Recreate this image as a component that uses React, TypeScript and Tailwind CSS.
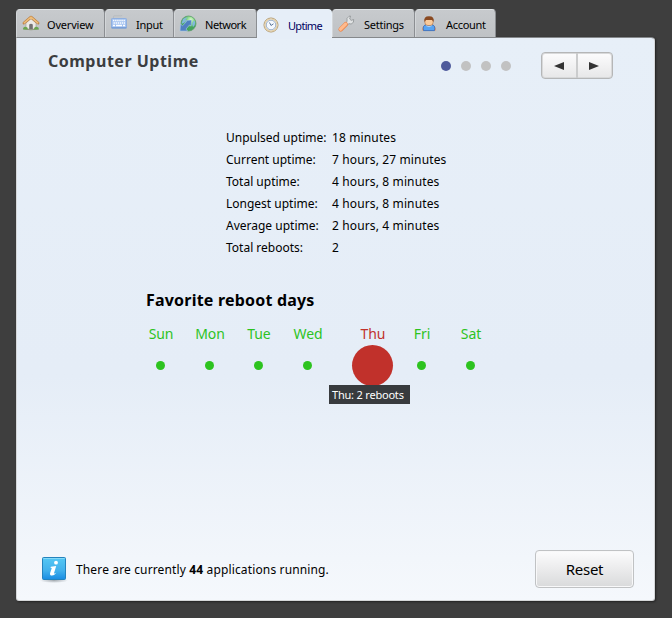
import React from "react";

function HomeIcon() {
  return (
    <svg width="18" height="18" viewBox="0 0 18 18">
      <ellipse cx="9" cy="14" rx="7.500" ry="1.200" fill="#8d9a7f" />
      <path d="M4 8 9 3.500 14 8v6H4z" fill="#eceae6" stroke="#a59c90" strokeWidth=".6" />
      <path d="M7.200 14V9.600q1.800-1.600 3.600 0V14z" fill="#747272" />
      <path d="M2 8 9 2.200 16 8" fill="none" stroke="#b97d40" strokeWidth="2.800" strokeLinejoin="round" strokeLinecap="round" />
      <path d="M2.200 7.800 9 2.200 15.800 7.800" fill="none" stroke="#edbd7a" strokeWidth="1.600" strokeLinejoin="round" strokeLinecap="round" />
      <path d="M1 14.500q0-3 2.500-2.800Q6 12 6 14.500zM12 14.500q0-3 2.500-2.800Q17 12 17 14.500z" fill="#69a64f" />
    </svg>
  );
}

function KeyboardIcon() {
  return (
    <svg width="18" height="18" viewBox="0 0 18 18">
      <path d="M3.500 3V1.800q0-1 1-1h6q1.500 0 1.500-.8" fill="none" stroke="#b5b9bd" strokeWidth=".8" />
      <rect x="1.500" y="3.500" width="15" height="9.500" rx=".8" fill="#a5c3f0" stroke="#8fafdf" />
      <path d="M3 5.500h12M3.500 8h11.500" stroke="#f9fcff" strokeWidth="1.500" strokeDasharray="1.400 .7" />
      <path d="M3 10.500h2m1 0h6m1 0h2" stroke="#fff" strokeWidth="1.400" />
      <path d="M1.500 12.900h15" stroke="#6691cf" />
    </svg>
  );
}

function GlobeIcon() {
  return (
    <svg width="18" height="18" viewBox="0 0 18 18">
      <defs>
        <radialGradient id="globe" cx="65%" cy="25%">
          <stop stopColor="#dcfacb" /><stop offset=".5" stopColor="#84d883" /><stop offset="1" stopColor="#43a25d" />
        </radialGradient>
      </defs>
      <circle cx="9.500" cy="8.500" r="7.500" fill="url(#globe)" stroke="#5c9c6c" strokeWidth=".8" />
      <path d="M4 4Q6 2 8.500 2.500L6 5.500l1 1-3 2-1.500 0zM14.500 5.500l1.500 1q.5 3.500-2 5.500l-.8-3z" fill="#80b8dc" />
      <path d="M1 16 1.500 9l2 1.800 4-4.300L6.500 5.500l6-.5-.5 6-1.500-1-3.500 4 1.500 2z" fill="#4f7fc0" stroke="#a8cdea" strokeWidth=".6" />
    </svg>
  );
}

function ClockIcon() {
  return (
    <svg width="16" height="16" viewBox="0 0 16 16">
      <circle cx="8" cy="8" r="7" fill="#fff" stroke="#b0976b" strokeWidth="1" />
      <circle cx="8" cy="8" r="6" fill="none" stroke="#e4cfa6" strokeWidth="1.100" />
      <circle cx="8" cy="8" r="4.800" fill="#f5f9ff" stroke="#8099ba" strokeWidth=".8" />
      <path d="M6.500 5.500 8 8.500 10.500 6.800" fill="none" stroke="#617b9e" strokeWidth="1" />
    </svg>
  );
}

function WrenchIcon() {
  return (
    <svg width="18" height="18" viewBox="0 0 18 18">
      <path d="M7.500 9 10 6.300Q9 3 12 1.300l1.500-.3-.8 3 1.500 1.400 2.500-.9q.5 3.500-2.300 4.300-1.200.4-2.400-.2L9.300 11z" fill="#e2e4e5" stroke="#8c9092" strokeWidth=".8" />
      <path d="m8.700 9.300-5 5" stroke="#eb8950" strokeWidth="4.600" strokeLinecap="round" />
      <path d="m8.600 9.200-5 5" stroke="#ffba8c" strokeWidth="3.200" strokeLinecap="round" />
    </svg>
  );
}

function UserIcon() {
  return (
    <svg width="16" height="16" viewBox="0 0 16 16">
      <path d="M.8 14.500Q1.500 9 5.500 8.500h5Q14.500 9 15.200 14.500z" fill="#e9a06a" />
      <path d="M2.500 14.600Q1 9 6 8.500h4Q15 9 13.500 14.600z" fill="#58a4f1" stroke="#2b67c0" strokeWidth=".8" />
      <path d="M5 9.500q3 2.500 6 0" stroke="#a5d1ff" fill="none" />
      <rect x="3.900" y="1.500" width="8.200" height="8" rx="3" fill="#f9cb9b" stroke="#a96b3e" strokeWidth=".6" />
      <path d="M3.500 6Q2.200.3 8 .3T12.500 6L11 4H5z" fill="#8a4a22" />
    </svg>
  );
}

function InfoIcon() {
  return (
    <svg width="28" height="28" viewBox="0 0 28 28">
      <defs>
        <linearGradient id="info" x2="0" y2="1"><stop stopColor="#55c8f4" /><stop offset=".6" stopColor="#41b0ec" /><stop offset="1" stopColor="#198ce3" /></linearGradient>
        <radialGradient id="infoShadow"><stop stopColor="#a5acb2" /><stop offset="1" stopColor="#a5acb2" stopOpacity="0" /></radialGradient>
      </defs>
      <ellipse cx="14" cy="24.500" rx="14" ry="2.500" fill="url(#infoShadow)" />
      <rect x="2.500" y="1.500" width="23" height="22" rx="1" fill="url(#info)" stroke="#2483bd" />
      <path d="M3.500 2.500h21" stroke="#84daf8" />
      <circle cx="16" cy="6.700" r="1.900" fill="#fff" />
      <path d="M10.800 10.800 16.200 10 14 17.200Q14 18 16.300 16.800 14.500 19.500 12 19.500 9.300 19.500 10.200 16.700L11.800 12 10.500 11.800z" fill="#fff" />
    </svg>
  );
}

const tabs = [
  { name: "Overview", icon: <HomeIcon />, box: "w-[89px] pl-[5px] gap-[7px] tracking-[-0.2px]" },
  { name: "Input", icon: <KeyboardIcon />, box: "w-[69px] pl-[4px] gap-[8px] tracking-[-0.3px]" },
  { name: "Network", icon: <GlobeIcon />, box: "w-[83px] pl-[4px] gap-[8px] tracking-[-0.45px]" },
  { name: "Uptime", icon: <ClockIcon />, box: "w-[75px] pl-[5px] gap-[9px] tracking-[-0.7px]", active: true },
  { name: "Settings", icon: <WrenchIcon />, box: "w-[83px] pl-[4px] gap-[9px] tracking-[-0.25px]" },
  { name: "Account", icon: <UserIcon />, box: "w-[81px] pl-[5px] gap-[9px] tracking-[-0.3px]" },
];

const stats = [
  ["Unpulsed uptime:", "18 minutes"],
  ["Current uptime:", "7 hours, 27 minutes"],
  ["Total uptime:", "4 hours, 8 minutes"],
  ["Longest uptime:", "4 hours, 8 minutes"],
  ["Average uptime:", "2 hours, 4 minutes"],
  ["Total reboots:", "2"],
];

const days = [
  { name: "Sun", box: "w-[49px]" },
  { name: "Mon", box: "w-[49px]" },
  { name: "Tue", box: "w-[49px]" },
  { name: "Wed", box: "w-[49px]" },
  { name: "Thu", box: "w-[81px]", hot: true },
  { name: "Fri", box: "w-[17px]" },
  { name: "Sat", box: "w-[81px]" },
];

export default function App() {
  return (
    <main className="h-[618px] w-[672px] overflow-hidden bg-[#3e3e3e] pl-[16px] pt-[9px] font-['Noto_Sans',sans-serif] text-[12px] text-black">
      <nav className="flex h-[28px] items-start">
        {tabs.map((t) => (
          <div
            key={t.name}
            className={`${t.box} flex shrink-0 items-center rounded-t-[4px] border border-b-0 text-[11px] ${
              t.active ? "relative z-10 h-[30px] border-[#e8f0f8] bg-[#e6eef8] pt-[1px] text-[#000060]" : "h-[28px] border-[#8b8e92] border-t-[#dce0e3] border-l-[#d3d6d9] bg-linear-to-b from-[#c7cacd] to-[#bfc2c5]"
            }`}
          >
            <span className="flex shrink-0">{t.icon}</span>
            <span className="whitespace-nowrap pt-[3px]">{t.name}</span>
          </div>
        ))}
      </nav>
      <section className="flex h-[564px] w-[639px] flex-col rounded-b-[3px] rounded-tr-[4px] border border-[#d5d7d9] border-t-[#85888b] bg-linear-to-b from-[#e7eff8] via-[#e5edf7] via-60% to-[#f5f8fc] shadow-[1px_1px_2px_#222]">
        <header className="flex h-[55px] items-start pl-[31px]">
          <h1 className="w-[393px] pt-[11px] text-[16px] leading-[24px] font-bold tracking-[0.5px] text-[#3b3d40]">Computer Uptime</h1>
          <div className="mt-[22.5px] flex w-[100px] gap-[10px]">
            <i className="size-[10px] rounded-full bg-[#4f5b9c]" />
            <i className="size-[10px] rounded-full bg-[#c2c2c2]" />
            <i className="size-[10px] rounded-full bg-[#c2c2c2]" />
            <i className="size-[10px] rounded-full bg-[#c2c2c2]" />
          </div>
          <div className="mt-[14px] flex h-[27px] w-[72px] rounded-[4px] border border-[#b5b6b7] bg-linear-to-b from-[#fcfcfd] to-[#e7e7e8] shadow-[inset_0_0_0_1px_#d8d9da]">
            <button className="flex w-[36px] items-center justify-center border-r-2 border-[#cbcccd]"><svg width="10" height="8"><path d="M0 4 10 0v8z" fill="#333" /></svg></button>
            <button className="flex flex-1 items-center justify-center pr-[2px]"><svg width="10" height="8"><path d="M10 4 0 0v8z" fill="#333" /></svg></button>
          </div>
        </header>
        <dl className="mt-[34px] grid grid-cols-[106px_1fr] pl-[209px] leading-[22px]">
          {stats.map(([k, v]) => (
            <React.Fragment key={k}>
              <dt className="whitespace-nowrap">{k}</dt>
              <dd className="tracking-[0.13px]">{v}</dd>
            </React.Fragment>
          ))}
        </dl>
        <h2 className="mt-[29px] pl-[129px] text-[16px] leading-[24px] font-bold tracking-[0.2px]">Favorite reboot days</h2>
        <div className="mt-[12px] flex pl-[118.5px] text-[14px]">
          {days.map((d) => (
            <div key={d.name} className={`${d.box} relative flex shrink-0 flex-col items-center ${d.hot ? "text-[#c1312b]" : "text-[#2dc31f]"}`}>
              <span className="relative left-[1px] leading-[20px] tracking-[-0.1px]">{d.name}</span>
              <div className="flex h-[42px] items-center">
                <i className={`block rounded-full ${d.hot ? "size-[41px] bg-[#c1312b]" : "size-[9px] bg-[#2dc31f]"}`} />
              </div>
              {d.hot && <span className="absolute left-[-2.5px] top-[61px] h-[19px] w-[81px] bg-[#383b3e] pl-[3px] text-[11px] leading-[20px] tracking-[-0.2px] whitespace-nowrap text-white">Thu: 2 reboots</span>}
            </div>
          ))}
        </div>
        <footer className="mt-auto mb-[12px] flex items-center pl-[23px]">
          <div className="flex w-[495px] items-center pt-[2px]">
            <InfoIcon />
            <p className="pl-[8px] tracking-[0.14px]">There are currently <b>44</b> applications running.</p>
          </div>
          <button className="h-[38px] w-[99px] rounded-[4px] border border-[#c0c2c4] bg-linear-to-b from-[#fcfcfd] via-[#ebebec] via-50% to-[#d9dadb] text-[15px] tracking-[-0.3px] shadow-[inset_0_0_0_1px_#f8f8f9]">Reset</button>
        </footer>
      </section>
    </main>
  );
}
